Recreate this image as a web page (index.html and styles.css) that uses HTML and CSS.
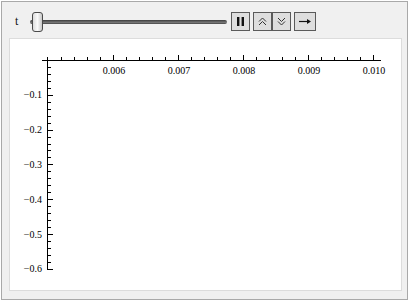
FILE: index.html
```html
<!DOCTYPE html>
<html lang="en">
<head>
<meta charset="UTF-8">
<title>Manipulate</title>
<link rel="stylesheet" href="styles.css">
</head>
<body>
<div class="panel">
  <div class="controls">
    <span class="label">t</span>
    <div class="slider">
      <div class="track"></div>
      <div class="thumb"></div>
    </div>
    <div class="buttons">
      <button class="btn" title="Pause">
        <svg width="11" height="11" viewBox="0 0 11 11"><rect x="2" y="1" width="2.4" height="9" fill="#111"/><rect x="6.6" y="1" width="2.4" height="9" fill="#111"/></svg>
      </button>
      <span class="pair">
        <button class="btn" title="Faster">
          <svg width="11" height="11" viewBox="0 0 11 11" fill="none" stroke="#333" stroke-width="1"><path d="M2 5.5 L5.5 2 L9 5.5 M2 9 L5.5 5.5 L9 9"/></svg>
        </button>
        <button class="btn" title="Slower">
          <svg width="11" height="11" viewBox="0 0 11 11" fill="none" stroke="#333" stroke-width="1"><path d="M2 2 L5.5 5.5 L9 2 M2 5.5 L5.5 9 L9 5.5"/></svg>
        </button>
      </span>
      <button class="btn wide" title="Direction">
        <svg width="14" height="11" viewBox="0 0 14 11"><path d="M1 5.5 H11" stroke="#111" stroke-width="1.2"/><path d="M9 3 L13 5.5 L9 8 Z" fill="#111"/></svg>
      </button>
    </div>
  </div>
  <div class="plot">
    <svg width="393" height="253" viewBox="9 38 393 253">
      <g id="axes" stroke="#000" stroke-width="1" shape-rendering="crispEdges"></g>
      <g id="labels" font-family="Liberation Serif, serif" font-size="10" fill="#000"></g>
    </svg>
  </div>
</div>
<script>
  // ejes del gráfico
  const axes = document.getElementById("axes");
  const labels = document.getElementById("labels");
  const NS = "http://www.w3.org/2000/svg";
  const X0 = 48, DX = 65, AY = 60, DY = 34.8;

  function line(x1, y1, x2, y2) {
    const l = document.createElementNS(NS, "line");
    l.setAttribute("x1", x1); l.setAttribute("y1", y1);
    l.setAttribute("x2", x2); l.setAttribute("y2", y2);
    axes.appendChild(l);
  }
  function text(x, y, s, anchor) {
    const t = document.createElementNS(NS, "text");
    t.setAttribute("x", x); t.setAttribute("y", y);
    t.setAttribute("text-anchor", anchor);
    t.textContent = s;
    labels.appendChild(t);
  }

  line(42, AY + 0.5, 381, AY + 0.5);
  line(X0 - 0.5, 57, X0 - 0.5, 270);

  for (let i = 1; i <= 25; i++) {
    const x = Math.round(X0 + i * DX / 5) + 0.5;
    line(x, AY, x, AY - (i % 5 === 0 ? 5 : 3));
  }
  ["0.006", "0.007", "0.008", "0.009", "0.010"].forEach((s, i) => {
    text(X0 + (i + 1) * DX + 1, AY + 14, s, "middle");
  });

  for (let i = 1; i <= 30; i++) {
    const y = Math.round(AY + i * DY / 5) + 0.5;
    line(X0, y, X0 + (i % 5 === 0 ? 5 : 3), y);
  }
  for (let i = 1; i <= 6; i++) {
    text(X0 - 6, AY + i * DY + 3.5, "\u22120." + i, "end");
  }
</script>
</body>
</html>
```
FILE: styles.css
```css
* {
    box-sizing: border-box;
}

body {
    margin: 0;
    background: #fff;
}

.panel {
    margin: 1px 0 0 1px;
    width: 407px;
    height: 299px;
    border: 1px solid #a9a9a9;
    background: #f0f0f0;
    padding: 0 5px 0 7px;
}

.controls {
    display: flex;
    align-items: center;
    height: 36px;
    padding-top: 3px;
}

.label {
    font-family: "Liberation Serif", serif;
    font-size: 12px;
    margin-left: 6px;
    width: 15px;
    color: #111;
}

.slider {
    position: relative;
    width: 197px;
    height: 20px;
}

.track {
    position: absolute;
    left: 0;
    right: 0;
    top: 8px;
    height: 4px;
    border-radius: 2px;
    background: linear-gradient(#3a3a3a, #777 60%, #444);
}

.thumb {
    position: absolute;
    left: 2px;
    top: 0;
    width: 11px;
    height: 20px;
    border: 1px solid #4a4a4a;
    border-radius: 3px;
    background: linear-gradient(90deg, #dcdcdc, #fafafa 50%, #c8c8c8);
}

.buttons {
    display: flex;
    gap: 3px;
    margin-left: 4px;
}

.pair {
    display: flex;
}

.btn {
    width: 19px;
    height: 19px;
    padding: 0;
    margin: 0;
    border: 1px solid #5a5a5a;
    background: #dedede;
    display: flex;
    align-items: center;
    justify-content: center;
}

.wide {
    width: 22px;
}

.plot {
    background: #fff;
    border: 1px solid #dcdcdc;
    width: 393px;
    height: 253px;
    overflow: hidden;
}

.plot svg {
    display: block;
    margin: -1px;
}
```
